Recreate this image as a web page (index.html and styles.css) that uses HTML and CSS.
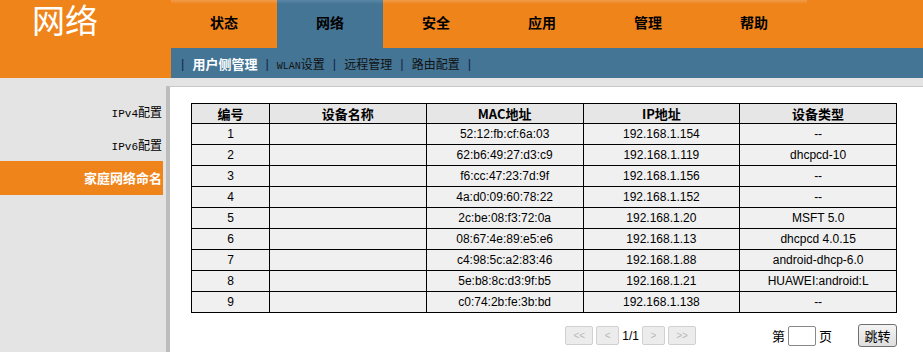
FILE: index.html
```html
<!DOCTYPE html>
<html lang="zh-CN">
<head>
    <meta charset="UTF-8">
    <title>网络 - 家庭网络命名</title>
    <link rel="stylesheet" href="styles.css">
</head>
<body>
    <div class="top">
        <div class="logo">网络</div>
        <div class="top-right">
            <div class="tabs">
                <div class="tab">状态</div>
                <div class="tab tab-on">网络</div>
                <div class="tab">安全</div>
                <div class="tab">应用</div>
                <div class="tab">管理</div>
                <div class="tab">帮助</div>
                <div class="tab-rest"></div>
            </div>
            <div class="subnav">
                <span class="sep">|</span><span class="sub sub-on">用户侧管理</span>
                <span class="sep">|</span><span class="sub"><span class="latin">WLAN</span>设置</span>
                <span class="sep">|</span><span class="sub">远程管理</span>
                <span class="sep">|</span><span class="sub">路由配置</span>
                <span class="sep">|</span>
            </div>
        </div>
    </div>

    <div class="main">
        <div class="side">
            <div class="side-item"><span class="latin">IPv4</span>配置</div>
            <div class="side-item"><span class="latin">IPv6</span>配置</div>
            <div class="side-item side-on">家庭网络命名</div>
        </div>
        <div class="panel">
            <table class="dev-table">
                <tr>
                    <th class="c-no">编号</th>
                    <th>设备名称</th>
                    <th>MAC地址</th>
                    <th>IP地址</th>
                    <th>设备类型</th>
                </tr>
                <tr><td>1</td><td></td><td>52:12:fb:cf:6a:03</td><td>192.168.1.154</td><td>--</td></tr>
                <tr><td>2</td><td></td><td>62:b6:49:27:d3:c9</td><td>192.168.1.119</td><td>dhcpcd-10</td></tr>
                <tr><td>3</td><td></td><td>f6:cc:47:23:7d:9f</td><td>192.168.1.156</td><td>--</td></tr>
                <tr><td>4</td><td></td><td>4a:d0:09:60:78:22</td><td>192.168.1.152</td><td>--</td></tr>
                <tr><td>5</td><td></td><td>2c:be:08:f3:72:0a</td><td>192.168.1.20</td><td>MSFT 5.0</td></tr>
                <tr><td>6</td><td></td><td>08:67:4e:89:e5:e6</td><td>192.168.1.13</td><td>dhcpcd 4.0.15</td></tr>
                <tr><td>7</td><td></td><td>c4:98:5c:a2:83:46</td><td>192.168.1.88</td><td>android-dhcp-6.0</td></tr>
                <tr><td>8</td><td></td><td>5e:b8:8c:d3:9f:b5</td><td>192.168.1.21</td><td>HUAWEI:android:L</td></tr>
                <tr><td>9</td><td></td><td>c0:74:2b:fe:3b:bd</td><td>192.168.1.138</td><td>--</td></tr>
            </table>

            <div class="pager">
                <div class="pages">
                    <button class="pg pg-wide" disabled>&lt;&lt;</button>
                    <button class="pg" disabled>&lt;</button>
                    <span class="pg-num">1/1</span>
                    <button class="pg" disabled>&gt;</button>
                    <button class="pg pg-wide" disabled>&gt;&gt;</button>
                </div>
                <div class="jump">
                    <span>第</span>
                    <input class="jump-input" type="text">
                    <span>页</span>
                    <button class="jump-btn">跳转</button>
                </div>
            </div>
        </div>
    </div>
</body>
</html>
```

FILE: styles.css
```css
html, body {
    margin: 0;
    padding: 0;
}

body {
    width: 923px;
    height: 352px;
    overflow: hidden;
    background: #e4e4e4;
    font-family: "Liberation Sans", "Noto Sans CJK SC", sans-serif;
    color: #000;
}

.latin {
    font-family: "Liberation Mono", monospace;
    font-size: 10px;
}

/* 顶部 */
.top {
    display: flex;
    height: 78px;
}

.logo {
    width: 171px;
    height: 78px;
    background: #ef841b;
    color: #fff;
    font-size: 33px;
    line-height: 38px;
    padding-left: 32px;
    box-sizing: border-box;
    font-family: "Noto Sans CJK SC", sans-serif;
}

.top-right {
    flex: 1;
    display: flex;
    flex-direction: column;
}

.tabs {
    display: flex;
    height: 48px;
}

.tab {
    width: 106px;
    background: linear-gradient(#f29b4a 0, #ef841b 4px);
    text-align: center;
    line-height: 44px;
    font-size: 14px;
    font-weight: bold;
    font-family: "Noto Sans CJK SC", sans-serif;
}

.tab-on {
    background: linear-gradient(#5a87a6 0, #447595 4px);
}

.tab-rest {
    flex: 1;
    background: #ef841b;
}

.subnav {
    height: 30px;
    background: #447595;
    display: flex;
    align-items: center;
    padding-left: 10px;
    font-size: 12px;
    font-family: "Noto Sans CJK SC", sans-serif;
}

.sep {
    color: #14264a;
    font-family: "Liberation Sans", sans-serif;
    font-size: 13px;
    margin-right: 8px;
}

.sub {
    color: #111;
    margin-right: 8px;
}

.sub-on {
    color: #fff;
    font-weight: bold;
    font-size: 13px;
}

/* 主体 */
.main {
    display: flex;
    height: 274px;
}

.side {
    width: 163px;
    padding-top: 17px;
}

.side-item {
    height: 33px;
    line-height: 33px;
    text-align: right;
    padding-right: 1px;
    font-size: 12px;
    font-family: "Noto Sans CJK SC", sans-serif;
}

.side-item .latin {
    font-size: 11px;
}

.side-on {
    height: 34px;
    line-height: 34px;
    background: #ef841b;
    color: #fff;
    font-weight: bold;
    font-size: 13px;
}

.panel {
    flex: 1;
    margin: 8px 0 0 3px;
    border-left: 4px solid #bdbdbd;
    border-top: 1px solid #c8c8c8;
    background: #fff;
    padding: 16px 0 0 21px;
}

.dev-table {
    border-collapse: collapse;
    width: 706px;
    table-layout: fixed;
}

.dev-table th,
.dev-table td {
    border: 1px solid #000;
    padding: 0;
    text-align: center;
}

.dev-table th {
    background: #e6e6e6;
    height: 19px;
    font-size: 13px;
    font-family: "Noto Sans CJK SC", sans-serif;
}

.dev-table td {
    background: #f0f0f0;
    height: 20px;
    font-size: 12px;
}

.c-no {
    width: 77px;
}

/* 分页 */
.pager {
    width: 706px;
    display: flex;
    justify-content: flex-end;
    align-items: center;
    margin-top: 11px;
    font-size: 13px;
}

.pages {
    display: flex;
    align-items: center;
    gap: 3px;
    margin-right: 76px;
}

.pg {
    width: 23px;
    height: 19px;
    padding: 0;
    border: 1px solid #d0d0d0;
    border-radius: 2px;
    background: #ececec;
    color: #b8b8b8;
    font-size: 10px;
    font-family: "Liberation Sans", sans-serif;
}

.pg-wide {
    width: 28px;
}

.pg-num {
    font-size: 12px;
}

.jump {
    display: flex;
    align-items: center;
    font-family: "Noto Sans CJK SC", sans-serif;
}

.jump-input {
    width: 28px;
    height: 20px;
    box-sizing: border-box;
    margin: 0 3px;
    border: 1px solid #888;
    border-radius: 2px;
    padding: 0;
}

.jump-btn {
    margin-left: 26px;
    width: 39px;
    height: 23px;
    padding: 0;
    border: 1px solid #707070;
    border-radius: 3px;
    background: linear-gradient(#f4f4f4, #dedede);
    font-size: 13px;
    font-family: "Noto Sans CJK SC", sans-serif;
    color: #000;
}
```
